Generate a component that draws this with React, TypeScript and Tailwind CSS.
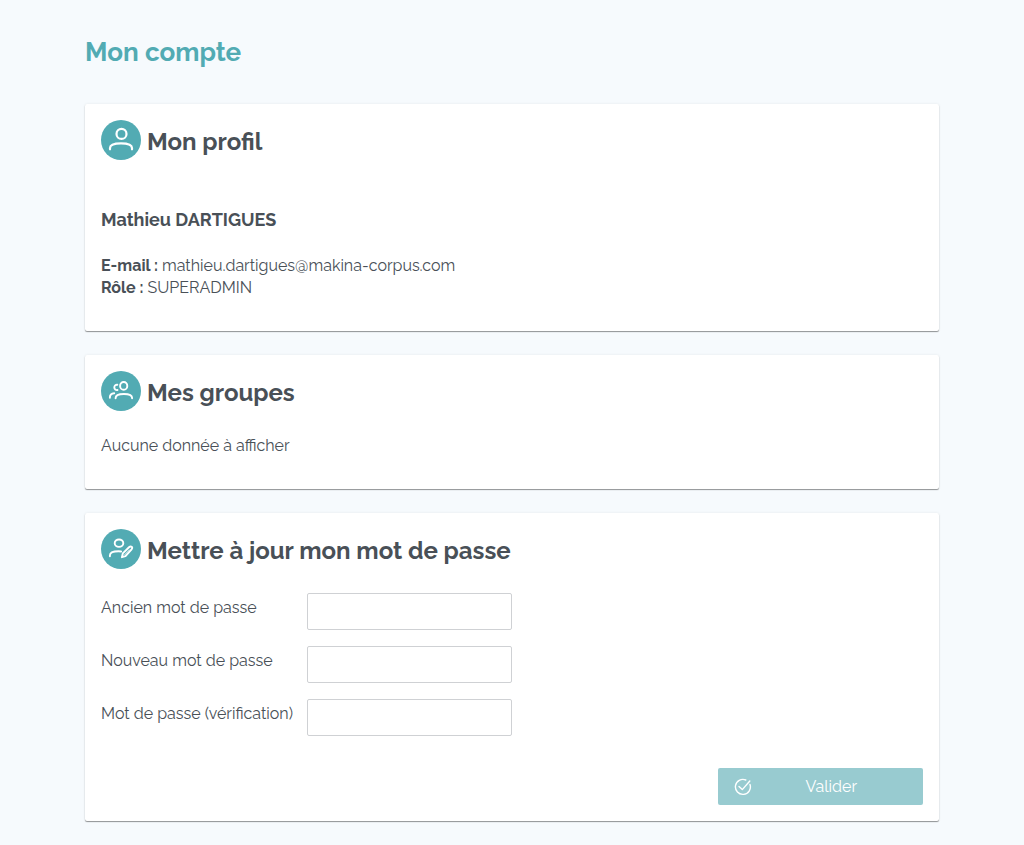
import { useId, type ReactNode } from 'react';

const strokeProps = {
  fill: 'none',
  stroke: 'currentColor',
  strokeLinecap: 'round',
  strokeLinejoin: 'round',
} as const;

function ProfileIcon() {
  return (
    <svg viewBox="0 0 40 40" className="size-10" strokeWidth="2.2" aria-hidden="true" {...strokeProps}>
      <circle cx="20.5" cy="13.9" r="5" />
      <path d="M9 29.3v-1.2c0-3 4.4-4.7 11-4.7s11 1.7 11 4.7v1.2" />
    </svg>
  );
}

function GroupsIcon() {
  return (
    <svg viewBox="0 0 40 40" className="size-10" strokeWidth="1.9" aria-hidden="true" {...strokeProps}>
      <ellipse cx="22.7" cy="14.9" rx="3.6" ry="3.9" />
      <path d="M16.3 13.7c-1.7-.2-3 1-3 2.8s1.5 3 3.2 2.5" />
      <path d="M14.6 27.3v-.4c0-2.5 3.4-3.9 8.3-3.9s8.2 1.5 8.2 4v.3" />
      <path d="M8.9 26.7v-.4c0-2.3 1.6-3.9 4.3-4.1" />
    </svg>
  );
}

function EditUserIcon() {
  return (
    <svg viewBox="0 0 40 40" className="size-10" strokeWidth="1.9" aria-hidden="true" {...strokeProps}>
      <ellipse cx="18" cy="14.2" rx="4.3" ry="3.7" />
      <path d="M8.9 27.2v-.7c0-2.8 3.3-4.2 8.6-4.2 1 0 1.8 0 2.6.2" />
      <path d="M20.9 28.2l.9-3.8 6.2-6.1c2-1.8 4.2-.2 2.6 2l-6.1 6.8z" />
      <path d="M23.8 25.6l4.5-4.6" strokeWidth="0.8" />
    </svg>
  );
}

function CheckIcon() {
  return (
    <svg viewBox="0 0 18 18" className="size-[18px]" strokeWidth="1.4" aria-hidden="true" {...strokeProps}>
      <path d="M11.8 2A7.5 7.5 0 1 0 16 6.5" />
      <path d="M5 8.4l3.3 3.2L15.8 3" />
    </svg>
  );
}

function Card({ icon, title, children }: { icon: ReactNode; title: string; children: ReactNode }) {
  return (
    <section className="mb-6 rounded-xs bg-white p-4 shadow-[0_1px_1px_rgba(0,0,0,0.4),0_0_3px_rgba(0,0,0,0.07)]">
      <div className="flex items-center gap-1.5">
        <span className="shrink-0 rounded-full bg-[#52abb3] text-white">{icon}</span>
        <h2 className="pt-1 text-[24px] leading-9 font-bold">{title}</h2>
      </div>
      {children}
    </section>
  );
}

function PasswordField({ label }: { label: string }) {
  const id = useId();
  return (
    <div className="flex">
      <label htmlFor={id} className="w-1/4 pt-1 whitespace-nowrap">
        {label}
      </label>
      <input id={id} type="password" className="h-[37px] w-1/4 rounded-xs border border-[#cfd1d4] bg-white px-3" />
    </div>
  );
}

export default function App() {
  return (
    <div className="min-h-screen bg-[#f6fafd] font-['Raleway','Lato',sans-serif] text-[16px] leading-[22px] font-normal text-[#495057]">
      <main className="flow-root px-[85px]">
        <h1 className="mt-8 mb-8 text-[26px] leading-10 font-bold text-[#52abb3]">Mon compte</h1>

        <Card icon={<ProfileIcon />} title="Mon profil">
          <h3 className="mt-12 text-[18px] leading-[23px] font-bold">Mathieu DARTIGUES</h3>
          <p className="mt-6 mb-4">
            <strong className="font-bold">E-mail :</strong> mathieu.dartigues@makina-corpus.com
            <br />
            <strong className="font-bold">Rôle :</strong> SUPERADMIN
          </p>
        </Card>

        <Card icon={<GroupsIcon />} title="Mes groupes">
          <p className="mt-6 mb-4">Aucune donnée à afficher</p>
        </Card>

        <Card icon={<EditUserIcon />} title="Mettre à jour mon mot de passe">
          <form className="mt-6" onSubmit={(event) => event.preventDefault()}>
            <div className="flex flex-col gap-4">
              <PasswordField label="Ancien mot de passe" />
              <PasswordField label="Nouveau mot de passe" />
              <PasswordField label="Mot de passe (vérification)" />
            </div>
            <div className="mt-8 flex justify-end">
              <button
                type="submit"
                disabled
                className="flex h-[37px] w-1/4 items-center rounded-xs bg-[#98cbd0] px-4 text-white"
              >
                <CheckIcon />
                <span className="flex-1 pl-1 text-center">Valider</span>
              </button>
            </div>
          </form>
        </Card>
      </main>
    </div>
  );
}
